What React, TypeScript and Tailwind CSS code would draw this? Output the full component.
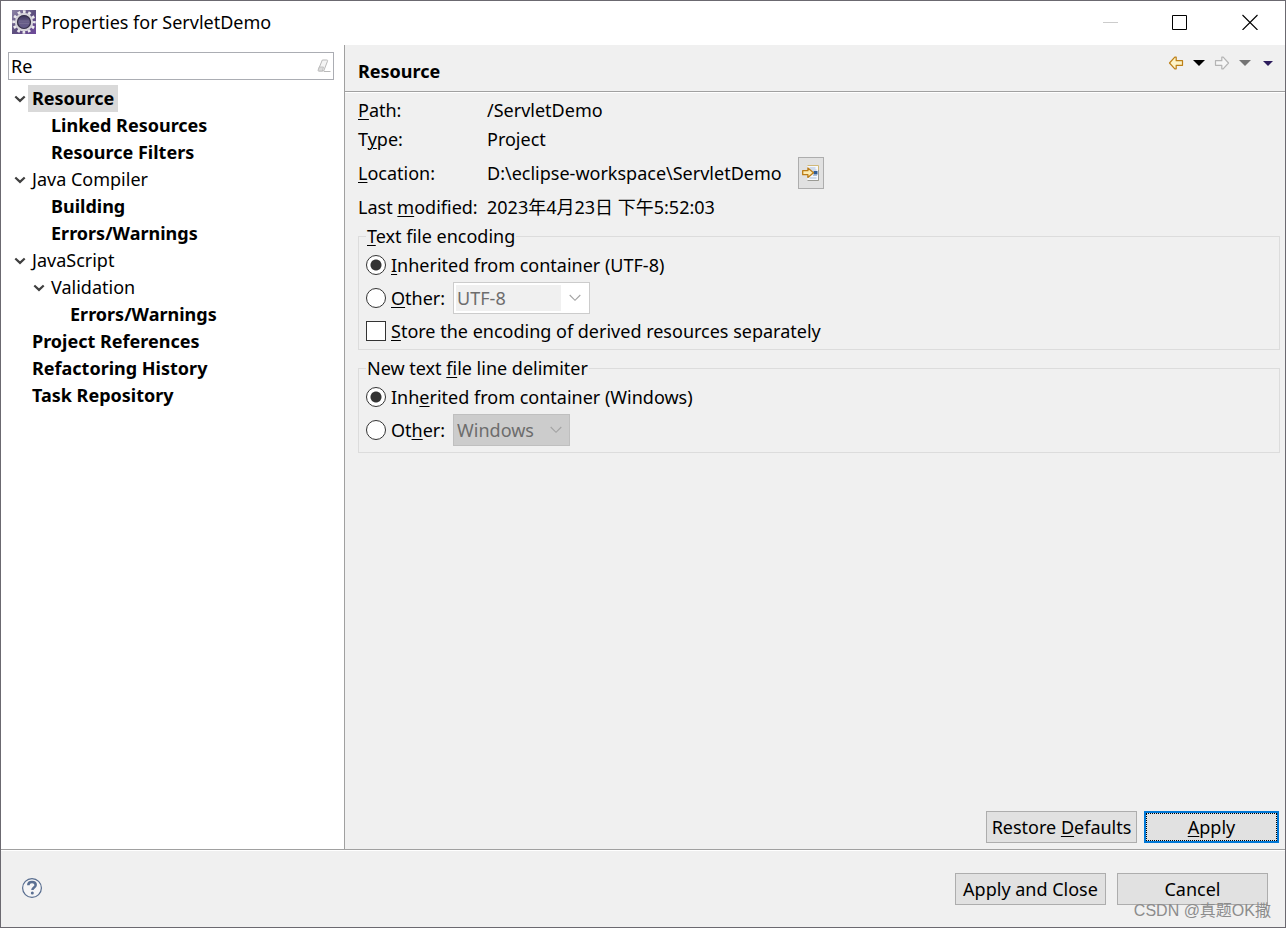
import React, { useState } from "react";

type TreeItem = {
  label: string;
  level: number;
  bold?: boolean;
  expandable?: boolean;
  selected?: boolean;
};

const treeItems: TreeItem[] = [
  { label: "Resource", level: 0, bold: true, expandable: true, selected: true },
  { label: "Linked Resources", level: 1, bold: true },
  { label: "Resource Filters", level: 1, bold: true },
  { label: "Java Compiler", level: 0, expandable: true },
  { label: "Building", level: 1, bold: true },
  { label: "Errors/Warnings", level: 1, bold: true },
  { label: "JavaScript", level: 0, expandable: true },
  { label: "Validation", level: 1, expandable: true },
  { label: "Errors/Warnings", level: 2, bold: true },
  { label: "Project References", level: 0, bold: true },
  { label: "Refactoring History", level: 0, bold: true },
  { label: "Task Repository", level: 0, bold: true },
];

const indents = ["pl-0", "pl-[19px]", "pl-[38px]"];

function Key({ children }: { children: string }) {
  return <span className="underline decoration-1 underline-offset-2">{children}</span>;
}

function GearLogo() {
  return (
    <svg width="24" height="24" viewBox="0 0 24 24" aria-hidden="true">
      <defs>
        <linearGradient id="logoBg" x1="0" y1="0" x2="1" y2="1">
          <stop offset="0" stopColor="#8f86a8" />
          <stop offset="0.5" stopColor="#5d4f7e" />
          <stop offset="1" stopColor="#6f4a9c" />
        </linearGradient>
        <linearGradient id="logoCore" x1="0" y1="0" x2="0" y2="1">
          <stop offset="0" stopColor="#2f2950" />
          <stop offset="0.5" stopColor="#675d88" />
          <stop offset="1" stopColor="#5f5687" />
        </linearGradient>
      </defs>
      <rect width="24" height="24" fill="url(#logoBg)" />
      <circle cx="12" cy="12" r="10.2" fill="none" stroke="#eceaee" strokeWidth="3" strokeDasharray="2.7 2.64" strokeDashoffset="1.35" />
      <circle cx="12" cy="12" r="8" fill="url(#logoCore)" stroke="#d6d4da" strokeWidth="2.4" />
      <circle cx="12" cy="12" r="6.5" fill="none" stroke="#37314a" strokeWidth="1.2" />
      <path d="M7 11h10M7 13.500h10" stroke="#7d7498" strokeWidth="0.7" />
    </svg>
  );
}

function TreeChevron() {
  return (
    <svg width="12" height="8" viewBox="0 0 12 8" aria-hidden="true">
      <path d="M1.300 1.500 6 5.900l4.700-4.400" fill="none" stroke="#404040" strokeWidth="2.200" />
    </svg>
  );
}

function ComboChevron() {
  return (
    <svg width="12" height="8" viewBox="0 0 12 8" aria-hidden="true">
      <path d="M0.700 1 6 6.300 11.300 1" fill="none" stroke="#a3a3a3" strokeWidth="1.100" />
    </svg>
  );
}

function Triangle({ color, small }: { color: string; small?: boolean }) {
  return (
    <svg width={small ? 10 : 12} height={small ? 5 : 6} viewBox="0 0 12 6" preserveAspectRatio="none" aria-hidden="true">
      <path d="M0 0h12L6 6z" fill={color} />
    </svg>
  );
}

function NavArrow({ forward }: { forward?: boolean }) {
  return (
    <svg width="16" height="14" viewBox="0 0 16 14" aria-hidden="true">
      {forward ? (
        <path d="M1.500 4.700h6.300V1.200h1.400l5.300 5.800-5.300 5.800H7.800V9.300H1.500z" fill="#f6f6f6" stroke="#b4b4b4" strokeWidth="1.200" strokeLinejoin="round" />
      ) : (
        <path d="M14.500 4.700H8.200V1.200H6.800L1.500 7l5.300 5.800h1.400V9.300h6.300z" fill="#fdf3c6" stroke="#bd7f16" strokeWidth="1.200" strokeLinejoin="round" />
      )}
    </svg>
  );
}

function ShowInIcon() {
  return (
    <svg width="18" height="16" viewBox="0 0 18 16" aria-hidden="true">
      <path d="M5.500 0.500h11v15h-11z" fill="#f6f8fc" />
      <path d="M5.500 0.500h11v15" fill="none" stroke="#d0b878" />
      <path d="M16.500 5v10.500h-11" fill="none" stroke="#9a9a94" />
      <path d="M7.500 3h6M7.500 5h7M11 10.500h4M7.500 13h7" stroke="#a9bedb" />
      <path d="M11.500 6h4v3.500h-4z" fill="#2d5b95" />
      <path d="M0.700 5.700h5.200V3l5.600 4.700-5.600 4.700V9.700H0.700z" fill="#fdecb4" stroke="#bb7c17" strokeWidth="1.300" strokeLinejoin="round" />
    </svg>
  );
}

function HelpIcon() {
  return (
    <svg width="22" height="22" viewBox="0 0 22 22" aria-hidden="true">
      <circle cx="11" cy="11" r="9.400" fill="#f5f5f6" stroke="#586d8f" strokeWidth="1.200" />
      <path d="M7.300 8.300c0-2.100 1.600-3.200 3.700-3.200s3.700 1.100 3.700 2.900c0 2.500-3.300 2.500-3.300 5" fill="none" stroke="#5a6f92" strokeWidth="2.500" />
      <circle cx="11.300" cy="16.100" r="1.500" fill="#5a6f92" />
    </svg>
  );
}

function EraserIcon() {
  return (
    <svg width="14" height="14" viewBox="0 0 14 14" aria-hidden="true">
      <path d="M5.300 1h4.500c.7 0 1 .5.700 1.200L6.700 12H2c-.7 0-1-.5-.7-1.200z" fill="#f4f4f4" stroke="#b9b9b9" />
      <path d="M2.300 8h4.200L5.400 12H2c-.7 0-1-.5-.7-1.200z" fill="#dcdcdc" stroke="#b9b9b9" strokeWidth="0.800" />
      <path d="M7 12.500h6.500" stroke="#b9b9b9" />
    </svg>
  );
}

function PushButton({ children, focused, width }: { children: React.ReactNode; focused?: boolean; width: string }) {
  return (
    <button
      type="button"
      className={`h-8 bg-[#e1e1e1] whitespace-nowrap ${width} ${
        focused ? "border-2 border-[#0078d7]" : "border border-[#adadad]"
      }`}
    >
      <span className={`flex h-full items-center justify-center ${focused ? "border border-dotted border-black" : ""}`}>
        <span>{children}</span>
      </span>
    </button>
  );
}

function RadioOption(props: { id: string; name: string; checked: boolean; onSelect: () => void; children: React.ReactNode }) {
  return (
    <div className="flex items-center gap-[5px]">
      <input
        id={props.id}
        type="radio"
        name={props.name}
        checked={props.checked}
        onChange={props.onSelect}
        className="size-5 shrink-0 appearance-none rounded-full border border-[#333333] bg-white checked:bg-[radial-gradient(circle,#333333_5px,#ffffff_6px)]"
      />
      <label htmlFor={props.id} className="whitespace-nowrap">
        {props.children}
      </label>
    </div>
  );
}

export default function App() {
  const [filter, setFilter] = useState("Re");
  const [encoding, setEncoding] = useState("inherited");
  const [delimiter, setDelimiter] = useState("inherited");
  const [derived, setDerived] = useState(false);

  return (
    <div className="relative flex min-h-screen flex-col border border-[#6b6970] bg-[#f0f0f0] font-['Noto_Sans','Noto_Sans_CJK_SC',sans-serif] text-[18px] leading-6 text-black">
      <header className="flex h-11 items-center bg-white pb-[2px] pl-[11px]">
        <GearLogo />
        <h1 className="ml-[5px] flex-1 whitespace-nowrap">Properties for ServletDemo</h1>
        <button type="button" aria-label="Minimize" disabled className="flex h-full w-[70px] items-center justify-center">
          <svg width="15" height="15" viewBox="0 0 15 15" aria-hidden="true">
            <path d="M0 7.500h15" stroke="#cccccc" />
          </svg>
        </button>
        <button type="button" aria-label="Maximize" className="flex h-full w-[70px] items-center justify-center">
          <svg width="16" height="16" viewBox="0 0 16 16" aria-hidden="true">
            <path d="M0.500 1.500h14v14h-14z" fill="none" stroke="#000000" />
          </svg>
        </button>
        <button type="button" aria-label="Close" className="flex h-full w-[70px] items-center justify-center">
          <svg width="16" height="16" viewBox="0 0 16 16" aria-hidden="true">
            <path d="M0.500 1l15 15M15.500 1l-15 15" stroke="#000000" strokeWidth="1.100" />
          </svg>
        </button>
      </header>

      <div className="flex flex-1">
        <aside className="w-[344px] shrink-0 border-r border-[#a0a0a0] bg-white pt-[7px] pr-[10px] pl-[7px]">
          <div className="flex h-7 items-center border border-[#abadb3] pr-[2px]">
            <input
              type="text"
              aria-label="Filter"
              value={filter}
              onChange={(e) => setFilter(e.target.value)}
              className="h-full min-w-0 flex-1 bg-transparent px-[2px] outline-none"
            />
            <button type="button" aria-label="Clear filter" onClick={() => setFilter("")}>
              <EraserIcon />
            </button>
          </div>
          <ul role="tree" aria-label="Pages" className="mt-[5px] pl-[6px]">
            {treeItems.map((item, i) => (
              <li
                key={i}
                role="treeitem"
                aria-selected={item.selected ? true : false}
                className={`flex h-[27px] items-center ${indents[item.level]}`}
              >
                <span className="flex w-[14px] shrink-0 items-center">{item.expandable && <TreeChevron />}</span>
                <span
                  className={`flex h-full items-center px-1 pb-[2px] whitespace-nowrap ${item.bold ? "font-bold" : ""} ${
                    item.selected ? "bg-[#d9d9d9]" : ""
                  }`}
                >
                  {item.label}
                </span>
              </li>
            ))}
          </ul>
        </aside>

        <main className="flex min-w-0 flex-1 flex-col">
          <div className="flex h-[47px] border-b border-[#a0a0a0] pl-[13px]">
            <h2 className="flex flex-1 items-center pt-[6px] font-bold">Resource</h2>
            <div className="flex h-9 pr-[6px]">
              <button type="button" aria-label="Back" className="flex w-[23px] items-center justify-center">
                <NavArrow />
              </button>
              <button type="button" aria-label="Back history" className="flex w-[23px] items-center justify-center">
                <Triangle color="#000000" />
              </button>
              <button type="button" aria-label="Forward" className="flex w-[23px] items-center justify-center">
                <NavArrow forward />
              </button>
              <button type="button" aria-label="Forward history" className="flex w-[23px] items-center justify-center">
                <Triangle color="#747474" />
              </button>
              <button type="button" aria-label="View menu" className="flex w-[23px] items-center justify-center">
                <Triangle color="#2c1c5c" small />
              </button>
            </div>
          </div>

          <div className="flex-1 border-t border-white pt-[5px] pr-[5px] pl-[13px]">
            <dl className="grid grid-cols-[124px_1fr] items-center gap-x-[5px] gap-y-[5px] whitespace-nowrap">
              <dt><Key>P</Key>ath:</dt>
              <dd>/ServletDemo</dd>
              <dt>T<Key>y</Key>pe:</dt>
              <dd>Project</dd>
              <dt><Key>L</Key>ocation:</dt>
              <dd className="flex h-[34px] items-center gap-4">
                <span>D:\eclipse-workspace\ServletDemo</span>
                <button
                  type="button"
                  aria-label="Show in system explorer"
                  className="flex h-8 w-[26px] items-center justify-center border border-[#adadad] bg-[#e1e1e1]"
                >
                  <ShowInIcon />
                </button>
              </dd>
              <dt>Last <Key>m</Key>odified:</dt>
              <dd className="h-6">2023年4月23日 下午5:52:03</dd>
            </dl>

            <fieldset className="mt-[5px] flex flex-col gap-[5px] border border-[#dcdcdc] px-[7px] pt-[5px] pb-[6px]">
              <legend className="px-px"><Key>T</Key>ext file encoding</legend>
              <RadioOption id="enc-inherited" name="encoding" checked={encoding === "inherited"} onSelect={() => setEncoding("inherited")}>
                <Key>I</Key>nherited from container (UTF-8)
              </RadioOption>
              <div className="flex items-center gap-2">
                <RadioOption id="enc-other" name="encoding" checked={encoding === "other"} onSelect={() => setEncoding("other")}>
                  <Key>O</Key>ther:
                </RadioOption>
                <div className="flex h-8 w-[137px] items-center border border-[#cccccc] bg-white p-[2px]">
                  <select
                    aria-label="Other encoding"
                    disabled={encoding !== "other"}
                    className="h-[26px] w-[105px] appearance-none bg-[#f0f0f0] pl-px text-[#6d6d6d] opacity-100"
                  >
                    <option>UTF-8</option>
                  </select>
                  <span className="flex flex-1 justify-center pl-[2px]">
                    <ComboChevron />
                  </span>
                </div>
              </div>
              <div className="flex items-center gap-[5px]">
                <input
                  id="derived"
                  type="checkbox"
                  checked={derived}
                  onChange={(e) => setDerived(e.target.checked)}
                  className="size-5 shrink-0 appearance-none border border-[#333333] bg-white checked:bg-[#333333]"
                />
                <label htmlFor="derived" className="whitespace-nowrap">
                  <Key>S</Key>tore the encoding of derived resources separately
                </label>
              </div>
            </fieldset>

            <fieldset className="mt-[6px] flex flex-col gap-[5px] border border-[#dcdcdc] px-[7px] pt-[5px] pb-[6px]">
              <legend className="px-px">New text <Key>f</Key>ile line delimiter</legend>
              <RadioOption id="del-inherited" name="delimiter" checked={delimiter === "inherited"} onSelect={() => setDelimiter("inherited")}>
                Inh<Key>e</Key>rited from container (Windows)
              </RadioOption>
              <div className="flex items-center gap-2">
                <RadioOption id="del-other" name="delimiter" checked={delimiter === "other"} onSelect={() => setDelimiter("other")}>
                  Ot<Key>h</Key>er:
                </RadioOption>
                <div className="flex h-8 w-[117px] items-center border border-[#bfbfbf] bg-[#cccccc]">
                  <select
                    aria-label="Other line delimiter"
                    disabled={delimiter !== "other"}
                    className="h-full w-[88px] appearance-none bg-transparent pl-[3px] text-[#6d6d6d] opacity-100"
                  >
                    <option>Windows</option>
                  </select>
                  <span className="flex flex-1 justify-center">
                    <ComboChevron />
                  </span>
                </div>
              </div>
            </fieldset>
          </div>

          <div className="flex justify-end gap-[7px] pr-[6px] pb-[6px]">
            <PushButton width="w-[151px]">Restore <Key>D</Key>efaults</PushButton>
            <PushButton width="w-[135px]" focused><Key>A</Key>pply</PushButton>
          </div>
        </main>
      </div>

      <footer className="border-t border-[#a0a0a0]">
        <div className="flex h-[77px] items-center border-t border-white pr-[17px] pl-5">
          <button type="button" aria-label="Help" className="pb-[2px]">
            <HelpIcon />
          </button>
          <div className="flex flex-1 justify-end gap-[11px]">
            <PushButton width="w-[151px]">Apply and Close</PushButton>
            <PushButton width="w-[151px]">Cancel</PushButton>
          </div>
        </div>
      </footer>

      <p className="pointer-events-none absolute right-[14px] bottom-1 font-['Liberation_Sans','Noto_Sans_CJK_SC',sans-serif] text-[16px] whitespace-nowrap text-[#8c8c8c]">
        CSDN @真题OK撒
      </p>
    </div>
  );
}
